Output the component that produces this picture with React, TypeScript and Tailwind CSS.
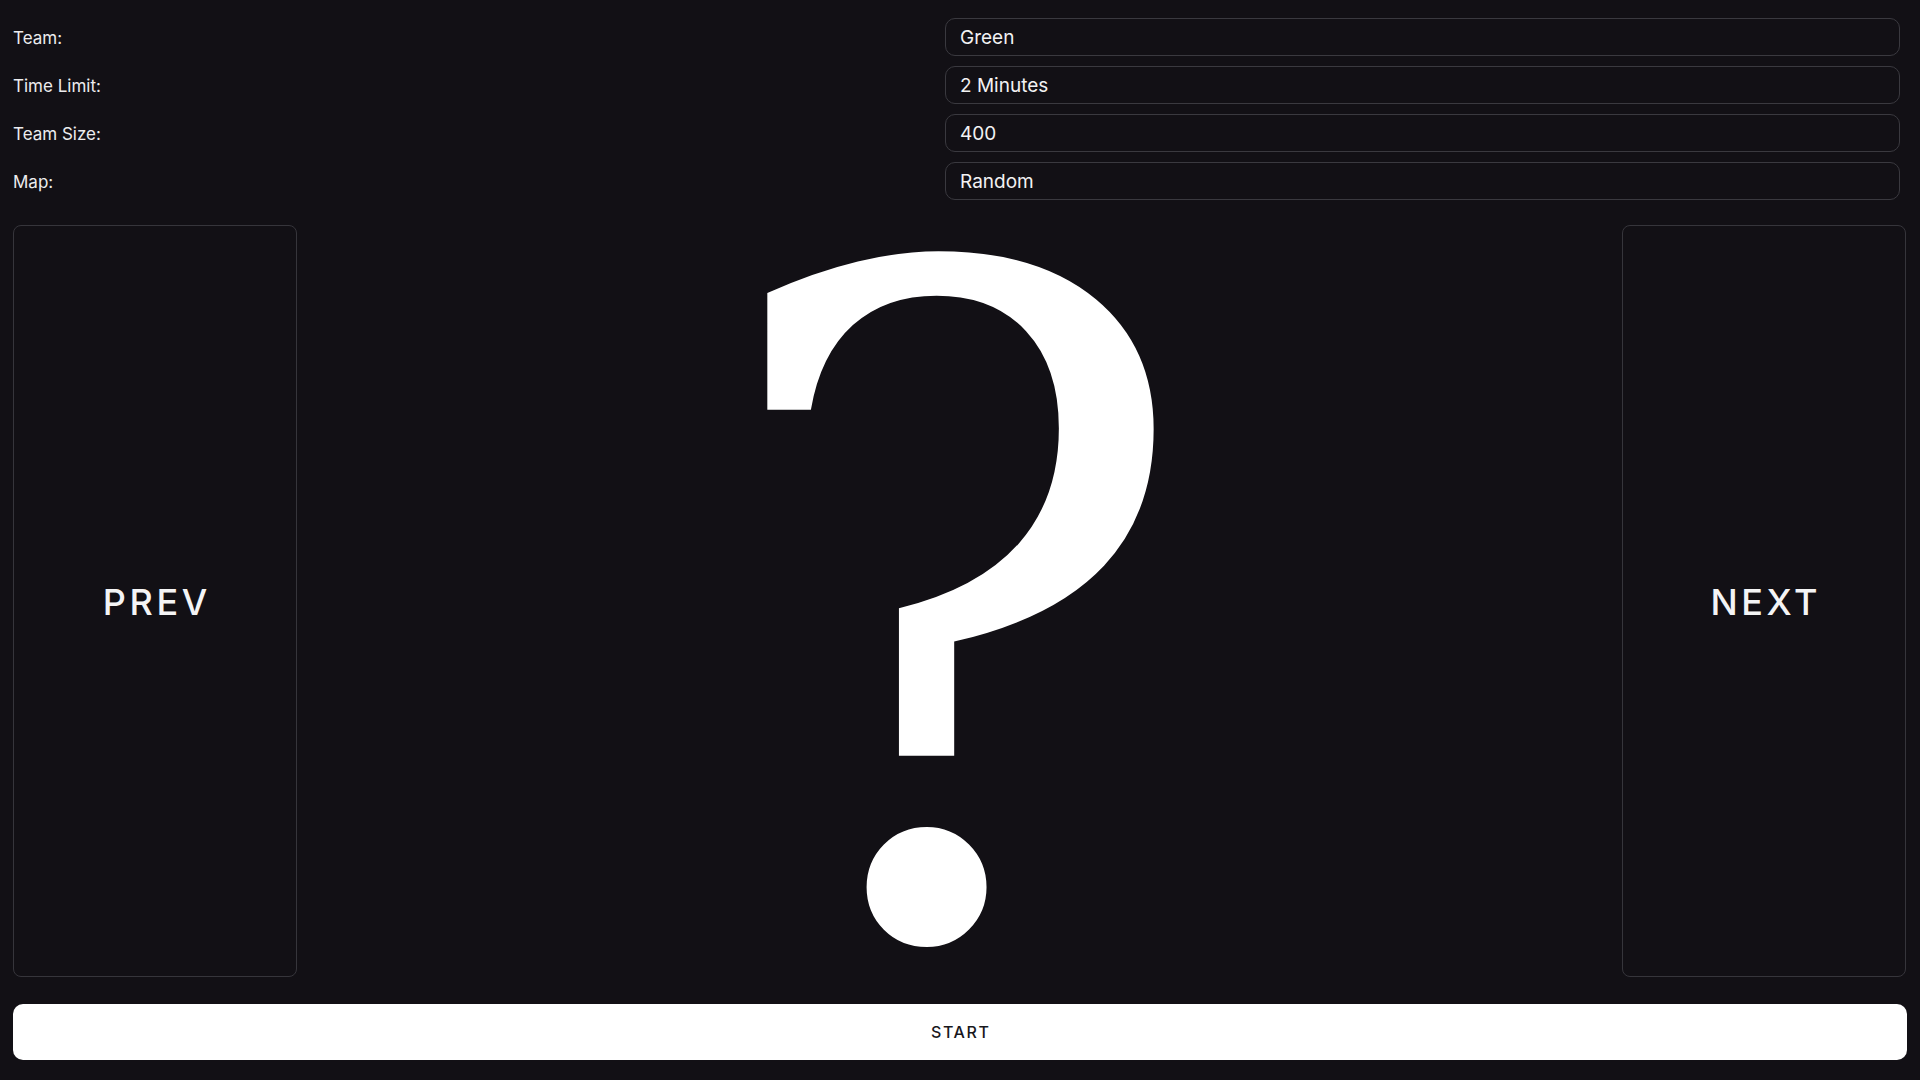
import React from "react";

const rows: [string, string][] = [
  ["Team:", "Green"],
  ["Time Limit:", "2 Minutes"],
  ["Team Size:", "400"],
  ["Map:", "Random"],
];

export default function App() {
  return (
    <div
      className="w-full h-screen bg-[#121015] text-white flex flex-col px-[13px] pt-[18px] pb-[20px] overflow-hidden"
      style={{ fontFamily: "Inter, 'Noto Sans', sans-serif" }}
    >
      <div className="flex flex-col gap-[10px]">
        {rows.map(([label, value]) => (
          <div key={label} className="flex items-center h-[38px]">
            <div className="flex-1 text-[17px] text-[#ececee] pt-[3px]">{label}</div>
            <div className="w-[955px] mr-[7px] h-[38px] flex items-center border border-[#3a393f] rounded-[10px] px-[14px] pt-[3px] text-[19px] text-[#f2f2f3]">
              {value}
            </div>
          </div>
        ))}
      </div>

      <div className="mt-[25px] flex-1 flex min-h-0">
        <button className="w-[284px] h-full border border-[#36353b] rounded-[8px] flex items-center justify-center text-[36px] font-medium tracking-[0.1em] text-[#f4f4f5] pl-[0.1em] pt-[1px]">
          PREV
        </button>
        <div className="flex-1 flex items-center justify-center overflow-visible">
          <span
            className="text-[920px] leading-[0.76] text-white pt-[30px] pr-[16px] select-none"
            style={{ fontFamily: "'DejaVu Serif', serif" }}
          >
            ?
          </span>
        </div>
        <button className="w-[284px] mr-[1px] h-full border border-[#36353b] rounded-[8px] flex items-center justify-center text-[36px] font-medium tracking-[0.1em] text-[#f4f4f5] pl-[0.1em] pt-[1px]">
          NEXT
        </button>
      </div>

      <button className="mt-[27px] h-[56px] w-full bg-white rounded-[10px] flex items-center justify-center text-[16px] font-medium tracking-[0.1em] text-[#18171c] pl-[0.1em]">
        START
      </button>
    </div>
  );
}
